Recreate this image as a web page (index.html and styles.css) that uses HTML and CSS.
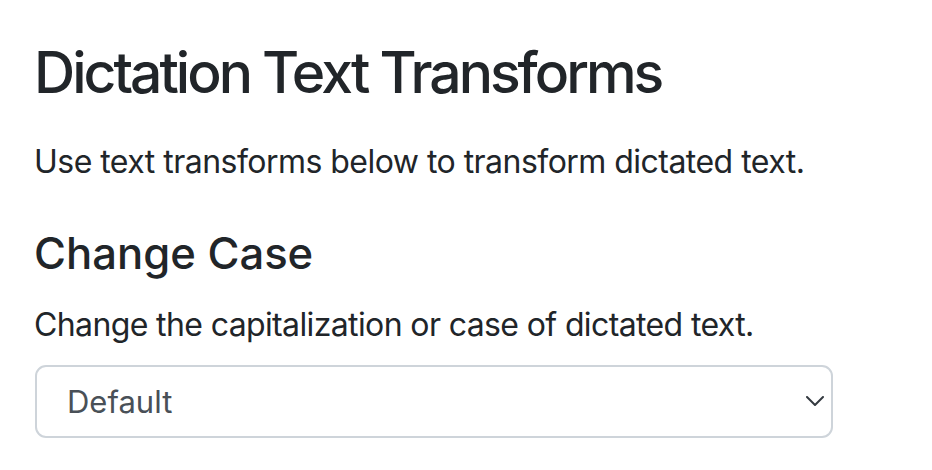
FILE: index.html
```html
<!DOCTYPE html>
<html lang="en">
<head>
<meta charset="utf-8">
<title>Dictation Text Transforms</title>
<link rel="stylesheet" href="styles.css">
</head>
<body>
<main class="page">
  <h1 class="title">Dictation Text Transforms</h1>
  <p class="lead-text">Use text transforms below to transform dictated text.</p>
  <h4 class="section-title">Change Case</h4>
  <p class="section-text">Change the capitalization or case of dictated text.</p>
  <div class="select" role="combobox" aria-expanded="false">
    <span class="select-value">Default</span>
    <svg class="select-chevron" width="18" height="10" viewBox="0 0 18 10" aria-hidden="true">
      <path d="M1 1l8 8 8-8" fill="none" stroke="#343a40" stroke-width="2" stroke-linecap="round" stroke-linejoin="round"/>
    </svg>
  </div>
</main>
</body>
</html>
```

FILE: styles.css
```css
html, body {
  margin: 0;
  padding: 0;
  background: #ffffff;
}

body {
  font-family: Inter, "Liberation Sans", Arial, sans-serif;
  color: #212529;
}

.page {
  padding: 39px 0 0 34px;
  width: 800px;
}

.title {
  margin: 0;
  font-size: 57px;
  line-height: 1.2;
  font-weight: 500;
  letter-spacing: -3px;
}

.lead-text {
  margin: 31px 0 0;
  font-size: 32px;
  line-height: 1.5;
  letter-spacing: -0.53px;
}

.section-title {
  margin: 42px 0 0;
  font-size: 43.6px;
  line-height: 1.2;
  font-weight: 500;
}

.section-text {
  margin: 20px 0 0;
  font-size: 32px;
  line-height: 1.5;
  letter-spacing: -0.62px;
}

.select {
  margin-top: 16px;
  margin-left: 1px;
  box-sizing: border-box;
  width: 798px;
  height: 73px;
  border: 2px solid #ced4da;
  border-radius: 11px;
  display: flex;
  align-items: center;
  justify-content: space-between;
  padding: 0 7px 0 30px;
}

.select-value {
  font-size: 31px;
  color: #495057;
}

.select-chevron {
  display: block;
}
```
